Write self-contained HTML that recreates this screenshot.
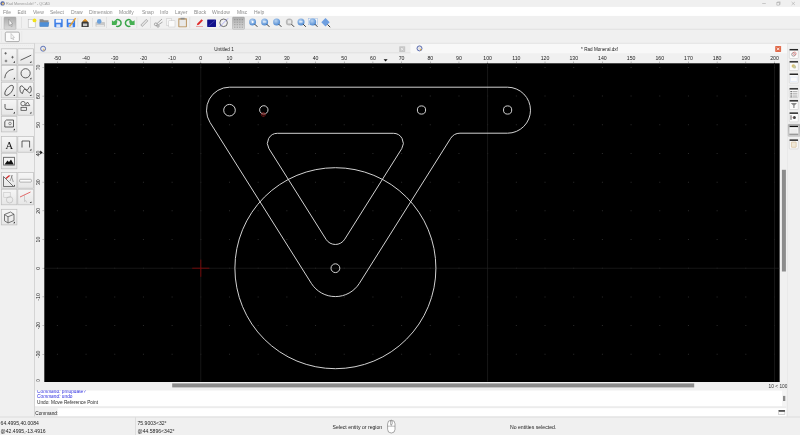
<!DOCTYPE html>
<html><head><meta charset="utf-8"><title>QCAD</title>
<style>html,body{margin:0;padding:0;width:800px;height:435px;overflow:hidden;background:#f0f0f0}svg{display:block;will-change:transform}text{font-family:"Liberation Sans",sans-serif}</style>
</head><body>
<svg width="800" height="435" viewBox="0 0 800 435">
<rect x="0" y="0" width="800" height="435" fill="#f0f0f0" />
<rect x="0" y="0" width="800" height="7" fill="#f0f0f0" />
<rect x="0" y="6.9" width="800" height="9" fill="#ffffff" />
<rect x="0" y="28.8" width="800" height="0.8" fill="#dcdcdc" />
<rect x="0" y="42.9" width="800" height="0.8" fill="#d4d4d4" />
<circle cx="2.6" cy="3.4" r="2.2" fill="#4a62a8"/><circle cx="2.9" cy="3.6" r="1.2" fill="#e8c070"/>
<text x="6" y="5.0" font-size="3.75" fill="#9a9a9a" text-anchor="start" >Rad Moneral.dxf * - QCAD</text>
<line x1="762.2" y1="3.5" x2="765.8" y2="3.5" stroke="#a0a0a0" stroke-width="0.5" />
<rect x="776.9" y="2.5" width="2.6" height="2.6" fill="none" stroke="#a0a0a0" stroke-width="0.5"/><path d="M 777.6,2.5 L 777.6,1.8 L 780.2,1.8 L 780.2,4.4 L 779.5,4.4" fill="none" stroke="#a0a0a0" stroke-width="0.4"/>
<path d="M 791.6,2 L 794.9,5 M 794.9,2 L 791.6,5" stroke="#a0a0a0" stroke-width="0.5"/>
<text x="3" y="13.7" font-size="5" fill="#8c8c8c" text-anchor="start" >File</text>
<text x="17.5" y="13.7" font-size="5" fill="#8c8c8c" text-anchor="start" >Edit</text>
<text x="33" y="13.7" font-size="5" fill="#8c8c8c" text-anchor="start" >View</text>
<text x="50" y="13.7" font-size="5" fill="#8c8c8c" text-anchor="start" >Select</text>
<text x="71" y="13.7" font-size="5" fill="#8c8c8c" text-anchor="start" >Draw</text>
<text x="89" y="13.7" font-size="5" fill="#8c8c8c" text-anchor="start" >Dimension</text>
<text x="119" y="13.7" font-size="5" fill="#8c8c8c" text-anchor="start" >Modify</text>
<text x="142" y="13.7" font-size="5" fill="#8c8c8c" text-anchor="start" >Snap</text>
<text x="160" y="13.7" font-size="5" fill="#8c8c8c" text-anchor="start" >Info</text>
<text x="175" y="13.7" font-size="5" fill="#8c8c8c" text-anchor="start" >Layer</text>
<text x="194" y="13.7" font-size="5" fill="#8c8c8c" text-anchor="start" >Block</text>
<text x="212" y="13.7" font-size="5" fill="#8c8c8c" text-anchor="start" >Window</text>
<text x="237" y="13.7" font-size="5" fill="#8c8c8c" text-anchor="start" >Misc</text>
<text x="254" y="13.7" font-size="5" fill="#8c8c8c" text-anchor="start" >Help</text>
<rect x="1.0" y="17" width="0.5" height="11.5" fill="#d8d8d8" />
<defs><linearGradient id="pg" x1="0" y1="0" x2="0" y2="1"><stop offset="0" stop-color="#ababab"/><stop offset="1" stop-color="#dadada"/></linearGradient><linearGradient id="bg2" x1="0" y1="0" x2="0" y2="1"><stop offset="0" stop-color="#f6f6f6"/><stop offset="1" stop-color="#e6e6e6"/></linearGradient><radialGradient id="mag" cx="0.4" cy="0.35" r="0.7"><stop offset="0" stop-color="#b9d4f2"/><stop offset="1" stop-color="#4a86d0"/></radialGradient></defs>
<rect x="4" y="17.1" width="12" height="12.2" rx="0.8" fill="url(#pg)" stroke="#a8a8a8" stroke-width="0.5"/>
<path d="M 9,19.3 L 9,25.6 L 10.3,24.4 L 11.3,26.7 L 12.2,26.3 L 11.2,24.1 L 12.8,24 Z" fill="#f4f4f4" stroke="#6a6a6a" stroke-width="0.4"/>
<rect x="21.2" y="17" width="0.7" height="11" fill="#dcdcdc" />
<rect x="28.2" y="19.3" width="7" height="8.3" fill="#fafafa" stroke="#b0b0b0" stroke-width="0.5"/>
<circle cx="34.5" cy="20.4" r="1.9" fill="#f2e21a"/>
<path d="M 39.6,19.2 L 43,19.2 L 44,20.2 L 48.5,20.2 L 48.5,26.5 L 39.6,26.5 Z" fill="#8a8a8a"/>
<path d="M 39.6,22.3 L 49.2,22.3 L 48.3,26.7 L 39.8,26.7 Z" fill="#4f8fd6"/>
<rect x="54.3" y="18.9" width="8.4" height="8.3" rx="0.8" fill="#3d7ee6"/><rect x="55.8" y="19.4" width="5.4" height="3.3" fill="#f4f7ff"/><rect x="56.3" y="24.3" width="4" height="2.9" fill="#d8e4f8"/>
<rect x="66.7" y="18.9" width="8.4" height="8.3" rx="0.8" fill="#3d7ee6"/><rect x="68.2" y="19.4" width="5.4" height="3.3" fill="#f4f7ff"/><rect x="68.7" y="24.3" width="4" height="2.9" fill="#d8e4f8"/>
<path d="M 69.5,26.5 L 75.6,18.2" stroke="#e8a030" stroke-width="1.3"/>
<rect x="77.5" y="18" width="0.7" height="9" fill="#dcdcdc" />
<path d="M 81.5,27 L 81.5,22.5 Q 85,18 88.7,22.5 L 88.7,27 Z" fill="#3a3a3a"/><path d="M 82.3,21.5 L 85.1,18.8 L 87.9,21.5 Z" fill="#e09020"/><rect x="83" y="23.5" width="4.2" height="2.6" fill="#c8c8c8"/>
<rect x="92.3" y="18" width="0.7" height="9" fill="#dcdcdc" />
<rect x="95.5" y="22" width="9.5" height="4.8" rx="0.8" fill="#c8c8c8"/><rect x="96.5" y="25" width="7.5" height="1.8" fill="#e8e8e8"/><circle cx="99.2" cy="21.4" r="2.3" fill="#6aa0dc"/>
<rect x="106.3" y="17" width="0.7" height="11" fill="#dcdcdc" />
<path d="M 116.12,19.83 A 3.5 3.5 0 1 1 116.12,26.17" fill="none" stroke="#3aa54a" stroke-width="1.5"/>
<path d="M 111.9,20.2 L 113.7,21.6 L 116.2,19.6 L 117.4,21.8 L 116.4,25.1 L 111.9,25.1 Z" fill="#45b052"/>
<path d="M 130.38,19.83 A 3.5 3.5 0 1 0 130.38,26.17" fill="none" stroke="#3aa54a" stroke-width="1.5"/>
<path d="M 134.6,20.2 L 132.8,21.6 L 130.3,19.6 L 129.1,21.8 L 130.1,25.1 L 134.6,25.1 Z" fill="#45b052"/>
<rect x="136.5" y="17" width="0.7" height="11" fill="#dcdcdc" />
<path d="M 140.8,25 L 146.3,19.4 L 147.8,20.9 L 142.3,26.5 Z" fill="#e4e4e4" stroke="#777" stroke-width="0.5"/>
<rect x="150.2" y="17" width="0.7" height="11" fill="#dcdcdc" />
<circle cx="155.8" cy="24.3" r="1.4" fill="none" stroke="#777" stroke-width="0.6"/><circle cx="158" cy="26" r="1.2" fill="none" stroke="#777" stroke-width="0.6"/><path d="M 157,23.6 L 162,19 M 158.4,24.8 L 162.5,22" stroke="#888" stroke-width="0.7"/>
<rect x="166.3" y="18.8" width="5.5" height="6.5" fill="#f6f6f6" stroke="#bdbdbd" stroke-width="0.4"/><rect x="168.8" y="20.8" width="6.2" height="6.2" fill="#fbfbfb" stroke="#bdbdbd" stroke-width="0.4"/>
<rect x="178.3" y="18.2" width="8.6" height="9" rx="0.6" fill="#b99460"/><rect x="179.3" y="19.6" width="6.6" height="6.8" fill="#e9e9e9"/><rect x="180.6" y="17.8" width="4" height="1.6" fill="#8a8a8a"/>
<rect x="189.5" y="17" width="0.7" height="11" fill="#dcdcdc" />
<path d="M 196.8,25.3 L 197.4,23.4 L 201.5,19.2 L 203,20.6 L 198.9,24.8 Z" fill="#e02a2a"/><rect x="196" y="26" width="7" height="0.5" fill="#e06060"/>
<rect x="207.2" y="19.6" width="8.8" height="7.3" rx="0.4" fill="#10108a"/><path d="M 208.5,26 L 215,20.5" stroke="#7a7ad8" stroke-width="0.4"/>
<circle cx="223.6" cy="22.8" r="3.8" fill="none" stroke="#3a3a3a" stroke-width="0.7"/><path d="M 219.4,27 L 228,18.4" stroke="#6a6af0" stroke-width="0.5"/>
<rect x="232.5" y="17.1" width="12" height="12.2" rx="0.8" fill="url(#pg)" stroke="#a8a8a8" stroke-width="0.5"/>
<rect x="234.2" y="19.2" width="1.2" height="1.0" fill="#8a8a8a" />
<rect x="234.2" y="21.7" width="1.2" height="1.0" fill="#9a9a9a" />
<rect x="234.2" y="24.2" width="1.2" height="1.0" fill="#9a9a9a" />
<rect x="234.2" y="26.7" width="1.2" height="1.0" fill="#9a9a9a" />
<rect x="236.7" y="19.2" width="1.2" height="1.0" fill="#8a8a8a" />
<rect x="236.7" y="21.7" width="1.2" height="1.0" fill="#9a9a9a" />
<rect x="236.7" y="24.2" width="1.2" height="1.0" fill="#9a9a9a" />
<rect x="236.7" y="26.7" width="1.2" height="1.0" fill="#9a9a9a" />
<rect x="239.2" y="19.2" width="1.2" height="1.0" fill="#8a8a8a" />
<rect x="239.2" y="21.7" width="1.2" height="1.0" fill="#9a9a9a" />
<rect x="239.2" y="24.2" width="1.2" height="1.0" fill="#9a9a9a" />
<rect x="239.2" y="26.7" width="1.2" height="1.0" fill="#9a9a9a" />
<rect x="241.7" y="19.2" width="1.2" height="1.0" fill="#8a8a8a" />
<rect x="241.7" y="21.7" width="1.2" height="1.0" fill="#9a9a9a" />
<rect x="241.7" y="24.2" width="1.2" height="1.0" fill="#9a9a9a" />
<rect x="241.7" y="26.7" width="1.2" height="1.0" fill="#9a9a9a" />
<circle cx="252.60000000000002" cy="21.9" r="3.5" fill="url(#mag)"/><path d="M 254.8,24.2 L 257.40000000000003,26.8" stroke="#3a3a3a" stroke-width="1"/>
<path d="M 251.8,20.4 L 254.3,21.9 L 251.8,23.4 Z" fill="#fff"/>
<circle cx="264.6" cy="21.9" r="3.5" fill="url(#mag)"/><path d="M 266.8,24.2 L 269.40000000000003,26.8" stroke="#3a3a3a" stroke-width="1"/>
<rect x="263" y="21.5" width="3.4" height="0.9" fill="#fff" />
<circle cx="276.6" cy="21.9" r="3.5" fill="url(#mag)"/><path d="M 278.8,24.2 L 281.40000000000003,26.8" stroke="#3a3a3a" stroke-width="1"/>
<circle cx="289.3" cy="21.9" r="3.5" fill="#b8b8b8"/><path d="M 291.5,24.2 L 294.1,26.8" stroke="#3a3a3a" stroke-width="1"/>
<rect x="287.7" y="20.2" width="3.3" height="3.3" fill="#e8e8e8"/>
<circle cx="301.0" cy="21.9" r="3.5" fill="url(#mag)"/><path d="M 303.2,24.2 L 305.8,26.8" stroke="#3a3a3a" stroke-width="1"/>
<path d="M 299.3,21.4 L 302.6,21.4 L 302.6,22.4 L 299.3,22.4 Z" fill="#fff"/>
<rect x="308.3" y="18.4" width="9.4" height="6.4" fill="#f8f8f8" stroke="#9ab8e0" stroke-width="0.5"/>
<circle cx="312.7" cy="21.9" r="3.5" fill="url(#mag)"/><path d="M 314.9,24.2 L 317.5,26.8" stroke="#3a3a3a" stroke-width="1"/>
<path d="M 325.5,18 L 329.7,22.2 L 325.5,26.4 L 321.3,22.2 Z" fill="#6f9fe0"/><path d="M 327.5,24.5 L 330.2,27.2" stroke="#3a3a3a" stroke-width="1"/>
<rect x="1.3" y="31" width="0.5" height="11" fill="#e2e2e2" />
<rect x="21.6" y="31" width="0.6" height="11" fill="#e4e4e4" />
<rect x="5.3" y="32.1" width="14.1" height="9.5" rx="1.3" fill="#fbfbfb" stroke="#8e8e8e" stroke-width="0.7"/>
<path d="M 11,33.5 L 11,39 L 12.2,38 L 13,39.8 L 13.8,39.4 L 13,37.7 L 14.5,37.5 Z" fill="#f4f4f4" stroke="#8a8a8a" stroke-width="0.35"/>
<rect x="34.2" y="43.5" width="0.7" height="373" fill="#c8c8c8" />
<rect x="2" y="45.6" width="0.8" height="0.4" fill="#dedede" />
<rect x="4" y="45.6" width="0.8" height="0.4" fill="#dedede" />
<rect x="6" y="45.6" width="0.8" height="0.4" fill="#dedede" />
<rect x="8" y="45.6" width="0.8" height="0.4" fill="#dedede" />
<rect x="10" y="45.6" width="0.8" height="0.4" fill="#dedede" />
<rect x="12" y="45.6" width="0.8" height="0.4" fill="#dedede" />
<rect x="14" y="45.6" width="0.8" height="0.4" fill="#dedede" />
<rect x="16" y="45.6" width="0.8" height="0.4" fill="#dedede" />
<rect x="18" y="45.6" width="0.8" height="0.4" fill="#dedede" />
<rect x="20" y="45.6" width="0.8" height="0.4" fill="#dedede" />
<rect x="22" y="45.6" width="0.8" height="0.4" fill="#dedede" />
<rect x="24" y="45.6" width="0.8" height="0.4" fill="#dedede" />
<rect x="26" y="45.6" width="0.8" height="0.4" fill="#dedede" />
<rect x="28" y="45.6" width="0.8" height="0.4" fill="#dedede" />
<rect x="30" y="45.6" width="0.8" height="0.4" fill="#dedede" />
<rect x="32" y="45.6" width="0.8" height="0.4" fill="#dedede" />
<rect x="1.3" y="48.8" width="15.6" height="15.6" fill="url(#bg2)" stroke="#bcbcbc" stroke-width="0.7"/>
<path d="M 14.9,61.0 L 14.9,62.699999999999996 L 13.200000000000001,62.699999999999996 Z" fill="#111"/>
<rect x="17.8" y="48.8" width="15.6" height="15.6" fill="url(#bg2)" stroke="#bcbcbc" stroke-width="0.7"/>
<path d="M 31.4,61.0 L 31.4,62.699999999999996 L 29.700000000000003,62.699999999999996 Z" fill="#111"/>
<rect x="1.3" y="65.4" width="15.6" height="15.6" fill="url(#bg2)" stroke="#bcbcbc" stroke-width="0.7"/>
<path d="M 14.9,77.60000000000001 L 14.9,79.30000000000001 L 13.200000000000001,79.30000000000001 Z" fill="#111"/>
<rect x="17.8" y="65.4" width="15.6" height="15.6" fill="url(#bg2)" stroke="#bcbcbc" stroke-width="0.7"/>
<path d="M 31.4,77.60000000000001 L 31.4,79.30000000000001 L 29.700000000000003,79.30000000000001 Z" fill="#111"/>
<rect x="1.3" y="82.2" width="15.6" height="15.6" fill="url(#bg2)" stroke="#bcbcbc" stroke-width="0.7"/>
<path d="M 14.9,94.4 L 14.9,96.10000000000001 L 13.200000000000001,96.10000000000001 Z" fill="#111"/>
<rect x="17.8" y="82.2" width="15.6" height="15.6" fill="url(#bg2)" stroke="#bcbcbc" stroke-width="0.7"/>
<path d="M 31.4,94.4 L 31.4,96.10000000000001 L 29.700000000000003,96.10000000000001 Z" fill="#111"/>
<rect x="1.3" y="99.6" width="15.6" height="15.6" fill="url(#bg2)" stroke="#bcbcbc" stroke-width="0.7"/>
<path d="M 14.9,111.8 L 14.9,113.5 L 13.200000000000001,113.5 Z" fill="#111"/>
<rect x="17.8" y="99.6" width="15.6" height="15.6" fill="url(#bg2)" stroke="#bcbcbc" stroke-width="0.7"/>
<path d="M 31.4,111.8 L 31.4,113.5 L 29.700000000000003,113.5 Z" fill="#111"/>
<rect x="1.3" y="116.3" width="15.6" height="15.6" fill="url(#bg2)" stroke="#bcbcbc" stroke-width="0.7"/>
<path d="M 14.9,128.5 L 14.9,130.2 L 13.200000000000001,130.2 Z" fill="#111"/>
<path d="M 4.3,53.3 L 6.8999999999999995,53.3 M 5.6,52.0 L 5.6,54.599999999999994" stroke="#383838" stroke-width="0.6"/>
<path d="M 11.2,57.2 L 13.8,57.2 M 12.5,55.900000000000006 L 12.5,58.5" stroke="#383838" stroke-width="0.6"/>
<path d="M 4.7,61.0 L 7.3,61.0 M 6.0,59.7 L 6.0,62.3" stroke="#383838" stroke-width="0.6"/>
<line x1="20.5" y1="60.2" x2="31.2" y2="55.2" stroke="#383838" stroke-width="0.8" />
<path d="M 4.7,78.2 Q 5.5,70.2 13.5,69.2" fill="none" stroke="#383838" stroke-width="0.8"/>
<circle cx="25.6" cy="73.3" r="4.6" fill="none" stroke="#383838" stroke-width="0.8"/>
<ellipse cx="9.1" cy="90.4" rx="6" ry="2.8" transform="rotate(-52 9.1 90.4)" fill="none" stroke="#383838" stroke-width="0.8"/>
<path d="M 20,87 Q 21.5,84 24.5,88.5 Q 27,92.5 29,87.5 Q 31,84 31.3,90 Q 30.5,95.5 27,90.5 Q 24,86.5 22.5,93.5 Q 19.5,93 20,87 Z" fill="none" stroke="#383838" stroke-width="0.8"/>
<path d="M 5,104 L 5,107.6 Q 5,109.4 7,109.4 L 13,109.4" fill="none" stroke="#383838" stroke-width="0.8"/>
<circle cx="23" cy="103.6" r="2.2" fill="none" stroke="#383838" stroke-width="0.7"/><path d="M 27.5,102 L 29.8,105.6 L 25.2,105.6 Z" fill="none" stroke="#383838" stroke-width="0.7"/><rect x="21" y="107.3" width="5.5" height="3" fill="none" stroke="#383838" stroke-width="0.7"/>
<path d="M 4.8,127 L 4.8,121.5 L 6.5,120 L 13.5,120 L 13.5,127 Z" fill="none" stroke="#383838" stroke-width="0.8"/><circle cx="10" cy="123.5" r="1.3" fill="none" stroke="#383838" stroke-width="0.5"/>
<rect x="1.3" y="136.6" width="15.6" height="15.6" fill="url(#bg2)" stroke="#bcbcbc" stroke-width="0.7"/>
<rect x="17.8" y="136.6" width="15.6" height="15.6" fill="url(#bg2)" stroke="#bcbcbc" stroke-width="0.7"/>
<rect x="1.3" y="153.2" width="15.6" height="15.6" fill="url(#bg2)" stroke="#bcbcbc" stroke-width="0.7"/>
<path d="M 31.4,148.79999999999998 L 31.4,150.5 L 29.700000000000003,150.5 Z" fill="#111"/>
<text x="9.4" y="148.8" font-size="10.5" fill="#111" text-anchor="middle" style="font-family:Liberation Serif">A</text>
<path d="M 22,147.5 L 22,141 L 29.6,141 L 29.6,147.5" fill="none" stroke="#383838" stroke-width="0.8"/>
<rect x="3.6" y="157.3" width="10.8" height="7.8" fill="#f4f4f4" stroke="#555" stroke-width="0.8"/><path d="M 4.5,164.5 L 7.5,160.5 L 9,162 L 11,159.5 L 13.8,164.5 Z" fill="#111"/>
<rect x="1.3" y="172.6" width="15.6" height="15.6" fill="url(#bg2)" stroke="#bcbcbc" stroke-width="0.7"/>
<rect x="17.8" y="172.6" width="15.6" height="15.6" fill="url(#bg2)" stroke="#bcbcbc" stroke-width="0.7"/>
<rect x="1.3" y="189.2" width="15.6" height="15.6" fill="url(#bg2)" stroke="#bcbcbc" stroke-width="0.7"/>
<rect x="17.8" y="189.2" width="15.6" height="15.6" fill="url(#bg2)" stroke="#bcbcbc" stroke-width="0.7"/>
<path d="M 14.9,184.79999999999998 L 14.9,186.5 L 13.200000000000001,186.5 Z" fill="#111"/>
<path d="M 31.4,201.39999999999998 L 31.4,203.1 L 29.700000000000003,203.1 Z" fill="#111"/>
<path d="M 3.5,186.5 L 3.5,176.5 L 13.5,186.5 Z" fill="none" stroke="#555" stroke-width="0.8"/><path d="M 5.5,178 L 9.2,175 L 10,176 L 6.3,179 Z" fill="#d02a2a"/><path d="M 11,175 L 13.3,182 M 12.5,175 L 10,181" stroke="#555" stroke-width="0.5"/>
<rect x="19.6" y="179.3" width="11.8" height="2.8" rx="0.8" fill="#fafafa" stroke="#777" stroke-width="0.5"/>
<rect x="3.8" y="192.3" width="6.4" height="5" fill="none" stroke="#bdbdbd" stroke-width="0.5"/><circle cx="9.6" cy="199.8" r="3.2" fill="none" stroke="#aaa" stroke-width="0.5"/>
<path d="M 20,197 L 30.5,192" stroke="#e04848" stroke-width="0.8"/><path d="M 24.5,195 L 24.5,201.5 L 25.7,200.5 L 26.7,202.5" fill="none" stroke="#aaa" stroke-width="0.5"/>
<rect x="1.3" y="209.3" width="15.6" height="15.6" fill="url(#bg2)" stroke="#bcbcbc" stroke-width="0.7"/>
<path d="M 14.9,221.5 L 14.9,223.20000000000002 L 13.200000000000001,223.20000000000002 Z" fill="#111"/>
<path d="M 4.5,214.5 L 10.5,212 L 14,214.3 L 14,220.5 L 8,223 L 4.5,220.8 Z M 4.5,214.5 L 8,216.8 L 14,214.3 M 8,216.8 L 8,223" fill="none" stroke="#555" stroke-width="0.8"/>
<rect x="35" y="43.6" width="375.5" height="9.8" fill="#ededed" />
<rect x="410.5" y="43.6" width="376.5" height="9.8" fill="#f8f8f8" />
<rect x="35" y="52.6" width="375.5" height="0.7" fill="#d6d6d6" />
<circle cx="43.1" cy="48.7" r="2.5" fill="#e6e6ea" stroke="#5068b0" stroke-width="0.9"/><path d="M 43.2,48.4 L 45,50 L 43.6,51 Z" fill="#e8b040"/>
<circle cx="419.5" cy="48.4" r="2.5" fill="#e6e6ea" stroke="#4a5ea8" stroke-width="0.9"/><path d="M 419.7,48.2 L 421.6,49.8 L 420.2,50.8 Z" fill="#e8b040"/>
<text x="224" y="51.3" font-size="4.6" fill="#222" text-anchor="middle" >Untitled 1</text>
<text x="599.5" y="51.3" font-size="4.6" fill="#222" text-anchor="middle" >* Rad Moneral.dxf</text>
<rect x="399.2" y="46.2" width="6" height="5.9" rx="0.6" fill="#c6c6c6"/><path d="M 401,48 L 403.4,50.3 M 403.4,48 L 401,50.3" stroke="#f8f8f8" stroke-width="0.7"/>
<rect x="775.2" y="46" width="5.9" height="5.9" rx="0.6" fill="#e06a4a"/><path d="M 776.9,47.7 L 779.4,50.2 M 779.4,47.7 L 776.9,50.2" stroke="#fff" stroke-width="0.8"/>
<rect x="35" y="53.7" width="752" height="9.4" fill="#f0f0f0" />
<text x="57.38" y="59.7" font-size="5.2" fill="#222" text-anchor="middle" >-50</text>
<rect x="57.125" y="61.5" width="0.5" height="1.5" fill="#888" />
<text x="86.06" y="59.7" font-size="5.2" fill="#222" text-anchor="middle" >-40</text>
<rect x="85.81" y="61.5" width="0.5" height="1.5" fill="#888" />
<text x="114.75" y="59.7" font-size="5.2" fill="#222" text-anchor="middle" >-30</text>
<rect x="114.495" y="61.5" width="0.5" height="1.5" fill="#888" />
<text x="143.43" y="59.7" font-size="5.2" fill="#222" text-anchor="middle" >-20</text>
<rect x="143.18" y="61.5" width="0.5" height="1.5" fill="#888" />
<text x="172.12" y="59.7" font-size="5.2" fill="#222" text-anchor="middle" >-10</text>
<rect x="171.865" y="61.5" width="0.5" height="1.5" fill="#888" />
<text x="200.8" y="59.7" font-size="5.2" fill="#222" text-anchor="middle" >0</text>
<rect x="200.55" y="61.5" width="0.5" height="1.5" fill="#888" />
<text x="229.49" y="59.7" font-size="5.2" fill="#222" text-anchor="middle" >10</text>
<rect x="229.235" y="61.5" width="0.5" height="1.5" fill="#888" />
<text x="258.17" y="59.7" font-size="5.2" fill="#222" text-anchor="middle" >20</text>
<rect x="257.92" y="61.5" width="0.5" height="1.5" fill="#888" />
<text x="286.86" y="59.7" font-size="5.2" fill="#222" text-anchor="middle" >30</text>
<rect x="286.605" y="61.5" width="0.5" height="1.5" fill="#888" />
<text x="315.54" y="59.7" font-size="5.2" fill="#222" text-anchor="middle" >40</text>
<rect x="315.29" y="61.5" width="0.5" height="1.5" fill="#888" />
<text x="344.23" y="59.7" font-size="5.2" fill="#222" text-anchor="middle" >50</text>
<rect x="343.975" y="61.5" width="0.5" height="1.5" fill="#888" />
<text x="372.91" y="59.7" font-size="5.2" fill="#222" text-anchor="middle" >60</text>
<rect x="372.66" y="61.5" width="0.5" height="1.5" fill="#888" />
<text x="401.6" y="59.7" font-size="5.2" fill="#222" text-anchor="middle" >70</text>
<rect x="401.345" y="61.5" width="0.5" height="1.5" fill="#888" />
<text x="430.28" y="59.7" font-size="5.2" fill="#222" text-anchor="middle" >80</text>
<rect x="430.03000000000003" y="61.5" width="0.5" height="1.5" fill="#888" />
<text x="458.97" y="59.7" font-size="5.2" fill="#222" text-anchor="middle" >90</text>
<rect x="458.71500000000003" y="61.5" width="0.5" height="1.5" fill="#888" />
<text x="487.65" y="59.7" font-size="5.2" fill="#222" text-anchor="middle" >100</text>
<rect x="487.40000000000003" y="61.5" width="0.5" height="1.5" fill="#888" />
<text x="516.34" y="59.7" font-size="5.2" fill="#222" text-anchor="middle" >110</text>
<rect x="516.085" y="61.5" width="0.5" height="1.5" fill="#888" />
<text x="545.02" y="59.7" font-size="5.2" fill="#222" text-anchor="middle" >120</text>
<rect x="544.77" y="61.5" width="0.5" height="1.5" fill="#888" />
<text x="573.71" y="59.7" font-size="5.2" fill="#222" text-anchor="middle" >130</text>
<rect x="573.455" y="61.5" width="0.5" height="1.5" fill="#888" />
<text x="602.39" y="59.7" font-size="5.2" fill="#222" text-anchor="middle" >140</text>
<rect x="602.1400000000001" y="61.5" width="0.5" height="1.5" fill="#888" />
<text x="631.08" y="59.7" font-size="5.2" fill="#222" text-anchor="middle" >150</text>
<rect x="630.825" y="61.5" width="0.5" height="1.5" fill="#888" />
<text x="659.76" y="59.7" font-size="5.2" fill="#222" text-anchor="middle" >160</text>
<rect x="659.51" y="61.5" width="0.5" height="1.5" fill="#888" />
<text x="688.44" y="59.7" font-size="5.2" fill="#222" text-anchor="middle" >170</text>
<rect x="688.1949999999999" y="61.5" width="0.5" height="1.5" fill="#888" />
<text x="717.13" y="59.7" font-size="5.2" fill="#222" text-anchor="middle" >180</text>
<rect x="716.8800000000001" y="61.5" width="0.5" height="1.5" fill="#888" />
<text x="745.82" y="59.7" font-size="5.2" fill="#222" text-anchor="middle" >190</text>
<rect x="745.565" y="61.5" width="0.5" height="1.5" fill="#888" />
<text x="774.5" y="59.7" font-size="5.2" fill="#222" text-anchor="middle" >200</text>
<rect x="774.25" y="61.5" width="0.5" height="1.5" fill="#888" />
<path d="M 383.6,59.2 L 387.6,59.2 L 385.6,61.4 Z" fill="#111"/>
<path d="M 40.2,150.4 L 42.7,152.4 L 40.2,154.4 Z" fill="#111"/>
<clipPath id="vrc"><rect x="35" y="63" width="9.3" height="318.6"/></clipPath>
<g clip-path="url(#vrc)">
<text x="0" y="0" font-size="5.2" fill="#222" text-anchor="middle" transform="translate(39.9 382.94) rotate(-90)">-40</text>
<rect x="42.4" y="382.69" width="1.8" height="0.5" fill="#888" />
<text x="0" y="0" font-size="5.2" fill="#222" text-anchor="middle" transform="translate(39.9 354.25) rotate(-90)">-30</text>
<rect x="42.4" y="354.005" width="1.8" height="0.5" fill="#888" />
<text x="0" y="0" font-size="5.2" fill="#222" text-anchor="middle" transform="translate(39.9 325.57) rotate(-90)">-20</text>
<rect x="42.4" y="325.32" width="1.8" height="0.5" fill="#888" />
<text x="0" y="0" font-size="5.2" fill="#222" text-anchor="middle" transform="translate(39.9 296.88) rotate(-90)">-10</text>
<rect x="42.4" y="296.635" width="1.8" height="0.5" fill="#888" />
<text x="0" y="0" font-size="5.2" fill="#222" text-anchor="middle" transform="translate(39.9 268.20) rotate(-90)">0</text>
<rect x="42.4" y="267.95" width="1.8" height="0.5" fill="#888" />
<text x="0" y="0" font-size="5.2" fill="#222" text-anchor="middle" transform="translate(39.9 239.51) rotate(-90)">10</text>
<rect x="42.4" y="239.265" width="1.8" height="0.5" fill="#888" />
<text x="0" y="0" font-size="5.2" fill="#222" text-anchor="middle" transform="translate(39.9 210.83) rotate(-90)">20</text>
<rect x="42.4" y="210.57999999999998" width="1.8" height="0.5" fill="#888" />
<text x="0" y="0" font-size="5.2" fill="#222" text-anchor="middle" transform="translate(39.9 182.14) rotate(-90)">30</text>
<rect x="42.4" y="181.89499999999998" width="1.8" height="0.5" fill="#888" />
<text x="0" y="0" font-size="5.2" fill="#222" text-anchor="middle" transform="translate(39.9 153.46) rotate(-90)">40</text>
<rect x="42.4" y="153.20999999999998" width="1.8" height="0.5" fill="#888" />
<text x="0" y="0" font-size="5.2" fill="#222" text-anchor="middle" transform="translate(39.9 124.77) rotate(-90)">50</text>
<rect x="42.4" y="124.52499999999998" width="1.8" height="0.5" fill="#888" />
<text x="0" y="0" font-size="5.2" fill="#222" text-anchor="middle" transform="translate(39.9 96.09) rotate(-90)">60</text>
<rect x="42.4" y="95.83999999999997" width="1.8" height="0.5" fill="#888" />
<text x="0" y="0" font-size="5.2" fill="#222" text-anchor="middle" transform="translate(39.9 67.40) rotate(-90)">70</text>
<rect x="42.4" y="67.15499999999997" width="1.8" height="0.5" fill="#888" />
</g>
<rect x="44.3" y="63.3" width="735.5" height="318.7" fill="#000" />
<svg x="44.3" y="63" width="735.5" height="318.6" viewBox="44.3 63 735.5 318.6" overflow="hidden">
<path d="M56.88,353.75h1v1h-1zM56.88,325.07h1v1h-1zM56.88,296.38h1v1h-1zM56.88,267.70h1v1h-1zM56.88,239.01h1v1h-1zM56.88,210.33h1v1h-1zM56.88,181.64h1v1h-1zM56.88,152.96h1v1h-1zM56.88,124.27h1v1h-1zM56.88,95.59h1v1h-1zM56.88,66.90h1v1h-1zM85.56,353.75h1v1h-1zM85.56,325.07h1v1h-1zM85.56,296.38h1v1h-1zM85.56,267.70h1v1h-1zM85.56,239.01h1v1h-1zM85.56,210.33h1v1h-1zM85.56,181.64h1v1h-1zM85.56,152.96h1v1h-1zM85.56,124.27h1v1h-1zM85.56,95.59h1v1h-1zM85.56,66.90h1v1h-1zM114.25,353.75h1v1h-1zM114.25,325.07h1v1h-1zM114.25,296.38h1v1h-1zM114.25,267.70h1v1h-1zM114.25,239.01h1v1h-1zM114.25,210.33h1v1h-1zM114.25,181.64h1v1h-1zM114.25,152.96h1v1h-1zM114.25,124.27h1v1h-1zM114.25,95.59h1v1h-1zM114.25,66.90h1v1h-1zM142.93,353.75h1v1h-1zM142.93,325.07h1v1h-1zM142.93,296.38h1v1h-1zM142.93,267.70h1v1h-1zM142.93,239.01h1v1h-1zM142.93,210.33h1v1h-1zM142.93,181.64h1v1h-1zM142.93,152.96h1v1h-1zM142.93,124.27h1v1h-1zM142.93,95.59h1v1h-1zM142.93,66.90h1v1h-1zM171.62,353.75h1v1h-1zM171.62,325.07h1v1h-1zM171.62,296.38h1v1h-1zM171.62,267.70h1v1h-1zM171.62,239.01h1v1h-1zM171.62,210.33h1v1h-1zM171.62,181.64h1v1h-1zM171.62,152.96h1v1h-1zM171.62,124.27h1v1h-1zM171.62,95.59h1v1h-1zM171.62,66.90h1v1h-1zM200.30,353.75h1v1h-1zM200.30,325.07h1v1h-1zM200.30,296.38h1v1h-1zM200.30,267.70h1v1h-1zM200.30,239.01h1v1h-1zM200.30,210.33h1v1h-1zM200.30,181.64h1v1h-1zM200.30,152.96h1v1h-1zM200.30,124.27h1v1h-1zM200.30,95.59h1v1h-1zM200.30,66.90h1v1h-1zM228.99,353.75h1v1h-1zM228.99,325.07h1v1h-1zM228.99,296.38h1v1h-1zM228.99,267.70h1v1h-1zM228.99,239.01h1v1h-1zM228.99,210.33h1v1h-1zM228.99,181.64h1v1h-1zM228.99,152.96h1v1h-1zM228.99,124.27h1v1h-1zM228.99,95.59h1v1h-1zM228.99,66.90h1v1h-1zM257.67,353.75h1v1h-1zM257.67,325.07h1v1h-1zM257.67,296.38h1v1h-1zM257.67,267.70h1v1h-1zM257.67,239.01h1v1h-1zM257.67,210.33h1v1h-1zM257.67,181.64h1v1h-1zM257.67,152.96h1v1h-1zM257.67,124.27h1v1h-1zM257.67,95.59h1v1h-1zM257.67,66.90h1v1h-1zM286.36,353.75h1v1h-1zM286.36,325.07h1v1h-1zM286.36,296.38h1v1h-1zM286.36,267.70h1v1h-1zM286.36,239.01h1v1h-1zM286.36,210.33h1v1h-1zM286.36,181.64h1v1h-1zM286.36,152.96h1v1h-1zM286.36,124.27h1v1h-1zM286.36,95.59h1v1h-1zM286.36,66.90h1v1h-1zM315.04,353.75h1v1h-1zM315.04,325.07h1v1h-1zM315.04,296.38h1v1h-1zM315.04,267.70h1v1h-1zM315.04,239.01h1v1h-1zM315.04,210.33h1v1h-1zM315.04,181.64h1v1h-1zM315.04,152.96h1v1h-1zM315.04,124.27h1v1h-1zM315.04,95.59h1v1h-1zM315.04,66.90h1v1h-1zM343.73,353.75h1v1h-1zM343.73,325.07h1v1h-1zM343.73,296.38h1v1h-1zM343.73,267.70h1v1h-1zM343.73,239.01h1v1h-1zM343.73,210.33h1v1h-1zM343.73,181.64h1v1h-1zM343.73,152.96h1v1h-1zM343.73,124.27h1v1h-1zM343.73,95.59h1v1h-1zM343.73,66.90h1v1h-1zM372.41,353.75h1v1h-1zM372.41,325.07h1v1h-1zM372.41,296.38h1v1h-1zM372.41,267.70h1v1h-1zM372.41,239.01h1v1h-1zM372.41,210.33h1v1h-1zM372.41,181.64h1v1h-1zM372.41,152.96h1v1h-1zM372.41,124.27h1v1h-1zM372.41,95.59h1v1h-1zM372.41,66.90h1v1h-1zM401.10,353.75h1v1h-1zM401.10,325.07h1v1h-1zM401.10,296.38h1v1h-1zM401.10,267.70h1v1h-1zM401.10,239.01h1v1h-1zM401.10,210.33h1v1h-1zM401.10,181.64h1v1h-1zM401.10,152.96h1v1h-1zM401.10,124.27h1v1h-1zM401.10,95.59h1v1h-1zM401.10,66.90h1v1h-1zM429.78,353.75h1v1h-1zM429.78,325.07h1v1h-1zM429.78,296.38h1v1h-1zM429.78,267.70h1v1h-1zM429.78,239.01h1v1h-1zM429.78,210.33h1v1h-1zM429.78,181.64h1v1h-1zM429.78,152.96h1v1h-1zM429.78,124.27h1v1h-1zM429.78,95.59h1v1h-1zM429.78,66.90h1v1h-1zM458.47,353.75h1v1h-1zM458.47,325.07h1v1h-1zM458.47,296.38h1v1h-1zM458.47,267.70h1v1h-1zM458.47,239.01h1v1h-1zM458.47,210.33h1v1h-1zM458.47,181.64h1v1h-1zM458.47,152.96h1v1h-1zM458.47,124.27h1v1h-1zM458.47,95.59h1v1h-1zM458.47,66.90h1v1h-1zM487.15,353.75h1v1h-1zM487.15,325.07h1v1h-1zM487.15,296.38h1v1h-1zM487.15,267.70h1v1h-1zM487.15,239.01h1v1h-1zM487.15,210.33h1v1h-1zM487.15,181.64h1v1h-1zM487.15,152.96h1v1h-1zM487.15,124.27h1v1h-1zM487.15,95.59h1v1h-1zM487.15,66.90h1v1h-1zM515.84,353.75h1v1h-1zM515.84,325.07h1v1h-1zM515.84,296.38h1v1h-1zM515.84,267.70h1v1h-1zM515.84,239.01h1v1h-1zM515.84,210.33h1v1h-1zM515.84,181.64h1v1h-1zM515.84,152.96h1v1h-1zM515.84,124.27h1v1h-1zM515.84,95.59h1v1h-1zM515.84,66.90h1v1h-1zM544.52,353.75h1v1h-1zM544.52,325.07h1v1h-1zM544.52,296.38h1v1h-1zM544.52,267.70h1v1h-1zM544.52,239.01h1v1h-1zM544.52,210.33h1v1h-1zM544.52,181.64h1v1h-1zM544.52,152.96h1v1h-1zM544.52,124.27h1v1h-1zM544.52,95.59h1v1h-1zM544.52,66.90h1v1h-1zM573.21,353.75h1v1h-1zM573.21,325.07h1v1h-1zM573.21,296.38h1v1h-1zM573.21,267.70h1v1h-1zM573.21,239.01h1v1h-1zM573.21,210.33h1v1h-1zM573.21,181.64h1v1h-1zM573.21,152.96h1v1h-1zM573.21,124.27h1v1h-1zM573.21,95.59h1v1h-1zM573.21,66.90h1v1h-1zM601.89,353.75h1v1h-1zM601.89,325.07h1v1h-1zM601.89,296.38h1v1h-1zM601.89,267.70h1v1h-1zM601.89,239.01h1v1h-1zM601.89,210.33h1v1h-1zM601.89,181.64h1v1h-1zM601.89,152.96h1v1h-1zM601.89,124.27h1v1h-1zM601.89,95.59h1v1h-1zM601.89,66.90h1v1h-1zM630.58,353.75h1v1h-1zM630.58,325.07h1v1h-1zM630.58,296.38h1v1h-1zM630.58,267.70h1v1h-1zM630.58,239.01h1v1h-1zM630.58,210.33h1v1h-1zM630.58,181.64h1v1h-1zM630.58,152.96h1v1h-1zM630.58,124.27h1v1h-1zM630.58,95.59h1v1h-1zM630.58,66.90h1v1h-1zM659.26,353.75h1v1h-1zM659.26,325.07h1v1h-1zM659.26,296.38h1v1h-1zM659.26,267.70h1v1h-1zM659.26,239.01h1v1h-1zM659.26,210.33h1v1h-1zM659.26,181.64h1v1h-1zM659.26,152.96h1v1h-1zM659.26,124.27h1v1h-1zM659.26,95.59h1v1h-1zM659.26,66.90h1v1h-1zM687.94,353.75h1v1h-1zM687.94,325.07h1v1h-1zM687.94,296.38h1v1h-1zM687.94,267.70h1v1h-1zM687.94,239.01h1v1h-1zM687.94,210.33h1v1h-1zM687.94,181.64h1v1h-1zM687.94,152.96h1v1h-1zM687.94,124.27h1v1h-1zM687.94,95.59h1v1h-1zM687.94,66.90h1v1h-1zM716.63,353.75h1v1h-1zM716.63,325.07h1v1h-1zM716.63,296.38h1v1h-1zM716.63,267.70h1v1h-1zM716.63,239.01h1v1h-1zM716.63,210.33h1v1h-1zM716.63,181.64h1v1h-1zM716.63,152.96h1v1h-1zM716.63,124.27h1v1h-1zM716.63,95.59h1v1h-1zM716.63,66.90h1v1h-1zM745.32,353.75h1v1h-1zM745.32,325.07h1v1h-1zM745.32,296.38h1v1h-1zM745.32,267.70h1v1h-1zM745.32,239.01h1v1h-1zM745.32,210.33h1v1h-1zM745.32,181.64h1v1h-1zM745.32,152.96h1v1h-1zM745.32,124.27h1v1h-1zM745.32,95.59h1v1h-1zM745.32,66.90h1v1h-1zM774.00,353.75h1v1h-1zM774.00,325.07h1v1h-1zM774.00,296.38h1v1h-1zM774.00,267.70h1v1h-1zM774.00,239.01h1v1h-1zM774.00,210.33h1v1h-1zM774.00,181.64h1v1h-1zM774.00,152.96h1v1h-1zM774.00,124.27h1v1h-1zM774.00,95.59h1v1h-1zM774.00,66.90h1v1h-1z" fill="#2c2c2c"/>
<rect x="200.4" y="63" width="0.8" height="318.6" fill="#1c1c1c" />
<rect x="487.25" y="63" width="0.8" height="318.6" fill="#1c1c1c" />
<rect x="774.1" y="63" width="0.8" height="318.6" fill="#1c1c1c" />
<rect x="44.3" y="267.8" width="735.5" height="0.8" fill="#1c1c1c" />
<path d="M 192.20000000000002,268.2 L 209.4,268.2 M 200.8,259.59999999999997 L 200.8,276.8" stroke="#7a0808" stroke-width="0.9"/>
<g fill="none" stroke="#dcdcdc" stroke-width="0.95">
<path d="M 229.50,87.20 L 507.50,87.20 A 23.0 23.0 0 0 1 507.50,133.20 L 459.97,133.20 A 11.0 11.0 0 0 0 450.66,138.34 L 359.38,283.33 A 28.4 28.4 0 0 1 311.32,283.33 L 210.04,122.45 A 23.0 23.0 0 0 1 229.50,87.20 Z"/>
<path d="M 277.40,133.30 L 393.30,133.30 A 10.0 10.0 0 0 1 401.76,148.63 L 344.66,239.34 A 11.0 11.0 0 0 1 326.04,239.34 L 268.94,148.63 A 10.0 10.0 0 0 1 277.40,133.30 Z"/>
<circle cx="335.4" cy="268.2" r="100.5"/>
<circle cx="335.4" cy="268.2" r="4.4"/>
<circle cx="229.5" cy="110.2" r="5.8"/>
<circle cx="263.8" cy="109.9" r="4.2"/>
<circle cx="421.5" cy="110.0" r="4.1"/>
<circle cx="507.6" cy="110.0" r="4.1"/>
</g>
<circle cx="263.4" cy="114.5" r="2" fill="none" stroke="#8a1c1c" stroke-width="0.6"/><path d="M 261.2,114.5 L 265.6,114.5 M 263.4,112.3 L 263.4,116.7" stroke="#8a1c1c" stroke-width="0.5"/>
</svg>
<rect x="779.8" y="63" width="7.6" height="318.6" fill="#f0f0f0" />
<rect x="781.9" y="169.8" width="4" height="101.7" fill="#8c8c8c" />
<rect x="44.3" y="382" width="743" height="8.6" fill="#f0f0f0" />
<rect x="172.2" y="383.4" width="522" height="4" fill="#8c8c8c" />
<text x="778" y="387.6" font-size="4.8" fill="#333" text-anchor="middle" >10 &lt; 100</text>
<rect x="787.3" y="43.6" width="0.6" height="373" fill="#e2e2e2" />
<rect x="789.3" y="49.1" width="9" height="9.4" rx="0.8" fill="#fbfbfb" stroke="#c4c4c4" stroke-width="0.5"/>
<rect x="789.6" y="49.1" width="8.4" height="1.3" fill="#111" />
<circle cx="793.5" cy="54.4" r="1.8" fill="none" stroke="#555" stroke-width="0.5"/><circle cx="794.6" cy="53.6" r="1.6" fill="none" stroke="#e05050" stroke-width="0.5"/>
<rect x="789.3" y="61.2" width="9" height="9.4" rx="0.8" fill="#fbfbfb" stroke="#c4c4c4" stroke-width="0.5"/>
<rect x="789.6" y="61.2" width="8.4" height="1.3" fill="#111" />
<circle cx="793.4" cy="66" r="1.8" fill="#d8c070"/><circle cx="794.6" cy="66.9" r="1.6" fill="#c8c8a0"/>
<rect x="789.3" y="73.6" width="9" height="9.4" rx="0.8" fill="#fbfbfb" stroke="#c4c4c4" stroke-width="0.5"/>
<rect x="789.6" y="73.6" width="8.4" height="1.3" fill="#111" />
<rect x="790.6" y="77" width="6.5" height="4.3" fill="none" stroke="#c8d8f0" stroke-width="0.4"/>
<rect x="788.6" y="85.6" width="10.6" height="0.5" fill="#dcdcdc" />
<rect x="789.3" y="88.2" width="9" height="9.4" rx="0.8" fill="#fbfbfb" stroke="#c4c4c4" stroke-width="0.5"/>
<rect x="789.6" y="88.2" width="8.4" height="1.3" fill="#111" />
<rect x="790.4" y="91" width="1.5" height="0.9" fill="#555" />
<rect x="792.4" y="91" width="5" height="0.9" fill="#aaa" />
<rect x="790.4" y="92.8" width="1.5" height="0.9" fill="#555" />
<rect x="792.4" y="92.8" width="5" height="0.9" fill="#aaa" />
<rect x="790.4" y="94.6" width="1.5" height="0.9" fill="#555" />
<rect x="792.4" y="94.6" width="5" height="0.9" fill="#aaa" />
<rect x="790.4" y="96.4" width="1.5" height="0.9" fill="#555" />
<rect x="792.4" y="96.4" width="5" height="0.9" fill="#aaa" />
<rect x="789.3" y="100.2" width="9" height="9.4" rx="0.8" fill="#fbfbfb" stroke="#c4c4c4" stroke-width="0.5"/>
<rect x="789.6" y="100.2" width="8.4" height="1.3" fill="#111" />
<path d="M 790.8,103 L 797,103 L 794.5,105.5 L 794.5,108 L 793.3,108 L 793.3,105.5 Z" fill="#8a8a8a"/>
<rect x="789.3" y="112.5" width="9" height="9.4" rx="0.8" fill="#fbfbfb" stroke="#c4c4c4" stroke-width="0.5"/>
<rect x="789.6" y="112.5" width="8.4" height="1.3" fill="#111" />
<rect x="790.5" y="115.3" width="1" height="4.5" fill="#666"/><circle cx="794.4" cy="117.5" r="1.5" fill="#444"/><rect x="791.5" y="117.3" width="2" height="0.4" fill="#d09090"/>
<rect x="788.2" y="124.3" width="11.8" height="12" rx="0.6" fill="url(#pg)" stroke="#9a9a9a" stroke-width="0.4"/>
<rect x="789.3" y="125.8" width="9" height="9.4" rx="0.8" fill="#fbfbfb" stroke="#c4c4c4" stroke-width="0.5"/>
<rect x="789.6" y="125.8" width="8.4" height="1.3" fill="#111" />
<rect x="790.2" y="128.5" width="7.2" height="5.2" fill="#ececec"/>
<rect x="789.3" y="133.6" width="9" height="1.6" fill="#9a9a9a" />
<rect x="789.3" y="139.5" width="9" height="9.4" rx="0.8" fill="#fbfbfb" stroke="#c4c4c4" stroke-width="0.5"/>
<rect x="789.6" y="139.5" width="8.4" height="1.3" fill="#111" />
<rect x="791.4" y="142" width="4.8" height="5.3" rx="0.4" fill="#f0e8d8" stroke="#c8a878" stroke-width="0.5"/>
<rect x="35" y="390.6" width="747" height="15.8" fill="#ffffff" />
<rect x="782" y="390.6" width="4.3" height="15.8" fill="#f4f4f4" />
<rect x="783" y="395.9" width="2.3" height="5.1" fill="#8a8a8a" />
<g clip-path="url(#hclip)">
<text x="37" y="392.6" font-size="4.8" fill="#2a2ae0" text-anchor="start" ><tspan font-style="italic">Command:</tspan> pmupdate?</text>
</g>
<defs><clipPath id="hclip"><rect x="35" y="390.2" width="747" height="16.2"/></clipPath></defs>
<text x="37" y="398.3" font-size="4.8" fill="#2a2ae0" text-anchor="start" ><tspan font-style="italic">Command:</tspan> undo</text>
<text x="37" y="404.2" font-size="4.75" fill="#2a2a2a" text-anchor="start" >Undo: Move Reference Point</text>
<rect x="35" y="406.4" width="751" height="1.4" fill="#ececec" />
<text x="35.3" y="414.6" font-size="4.7" fill="#1a1a1a" text-anchor="start" >Command:</text>
<rect x="57.6" y="408.2" width="728.6" height="8.2" fill="#ffffff" />
<rect x="778.8" y="410.3" width="6.1" height="4.3" fill="#fafafa" stroke="#999" stroke-width="0.4"/>
<rect x="778.8" y="410.2" width="6.1" height="1.5" fill="#333" />
<rect x="0" y="416.6" width="800" height="0.8" fill="#d8d8d8" />
<rect x="135.3" y="417.4" width="0.6" height="17.6" fill="#d0d0d0" />
<text x="0.6" y="424.9" font-size="5.1" fill="#222" text-anchor="start" >64.4995,40.0084</text>
<text x="0.6" y="433.1" font-size="5.1" fill="#222" text-anchor="start" >@42.4995,-13.4916</text>
<text x="137.5" y="424.9" font-size="5.1" fill="#222" text-anchor="start" >75.9003&lt;32°</text>
<text x="137.5" y="433.1" font-size="5.1" fill="#222" text-anchor="start" >@44.5896&lt;342°</text>
<text x="332.5" y="428.8" font-size="5.15" fill="#222" text-anchor="start" >Select entity or region</text>
<rect x="387.6" y="420.2" width="7.4" height="12.8" rx="3.7" fill="#fff" stroke="#555" stroke-width="0.5"/><path d="M 387.6,426.2 L 395,426.2 M 391.3,420.2 L 391.3,426.2" stroke="#555" stroke-width="0.4"/><rect x="390.3" y="421" width="2" height="3.4" fill="#ddd" stroke="#555" stroke-width="0.3"/>
<text x="510" y="428.8" font-size="5.15" fill="#222" text-anchor="start" >No entities selected.</text>
</svg>
</body></html>
